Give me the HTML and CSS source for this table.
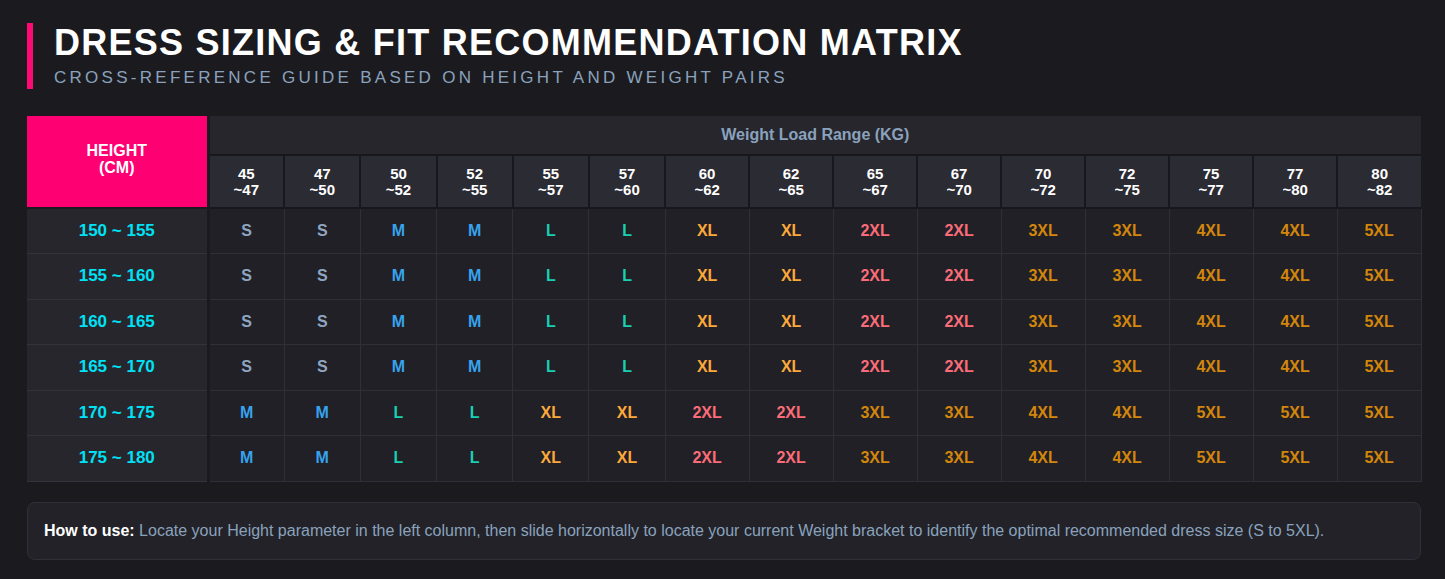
FILE: index.html
```html
<!DOCTYPE html>
<html lang="en">
<head>
<meta charset="utf-8">
<title>Dress Sizing &amp; Fit Recommendation Matrix</title>
<link rel="stylesheet" href="styles.css">
</head>
<body>
<main class="page">
  <header class="head">
    <h1 class="title">DRESS SIZING &amp; FIT RECOMMENDATION MATRIX</h1>
    <p class="subtitle">CROSS-REFERENCE GUIDE BASED ON HEIGHT AND WEIGHT PAIRS</p>
  </header>

  <table class="matrix">
    <colgroup>
      <col class="c-h">
      <col class="c-s"><col class="c-s"><col class="c-s"><col class="c-s"><col class="c-s"><col class="c-s">
      <col class="c-w"><col class="c-w"><col class="c-w"><col class="c-w"><col class="c-w"><col class="c-w"><col class="c-w"><col class="c-w"><col class="c-w">
    </colgroup>
    <thead>
      <tr class="r-top">
        <th class="corner" rowspan="2">HEIGHT<br>(CM)</th>
        <th class="range" colspan="15">Weight Load Range (KG)</th>
      </tr>
      <tr class="r-cols">
        <th>45<br>~47</th><th>47<br>~50</th><th>50<br>~52</th><th>52<br>~55</th><th>55<br>~57</th>
        <th>57<br>~60</th><th>60<br>~62</th><th>62<br>~65</th><th>65<br>~67</th><th>67<br>~70</th>
        <th>70<br>~72</th><th>72<br>~75</th><th>75<br>~77</th><th>77<br>~80</th><th>80<br>~82</th>
      </tr>
    </thead>
    <tbody>
      <tr>
        <th class="hgt">150 ~ 155</th>
        <td class="s">S</td><td class="s">S</td><td class="m">M</td><td class="m">M</td><td class="l">L</td><td class="l">L</td><td class="xl">XL</td><td class="xl">XL</td><td class="x2">2XL</td><td class="x2">2XL</td><td class="x3">3XL</td><td class="x3">3XL</td><td class="x3">4XL</td><td class="x3">4XL</td><td class="x3">5XL</td>
      </tr>
      <tr>
        <th class="hgt">155 ~ 160</th>
        <td class="s">S</td><td class="s">S</td><td class="m">M</td><td class="m">M</td><td class="l">L</td><td class="l">L</td><td class="xl">XL</td><td class="xl">XL</td><td class="x2">2XL</td><td class="x2">2XL</td><td class="x3">3XL</td><td class="x3">3XL</td><td class="x3">4XL</td><td class="x3">4XL</td><td class="x3">5XL</td>
      </tr>
      <tr>
        <th class="hgt">160 ~ 165</th>
        <td class="s">S</td><td class="s">S</td><td class="m">M</td><td class="m">M</td><td class="l">L</td><td class="l">L</td><td class="xl">XL</td><td class="xl">XL</td><td class="x2">2XL</td><td class="x2">2XL</td><td class="x3">3XL</td><td class="x3">3XL</td><td class="x3">4XL</td><td class="x3">4XL</td><td class="x3">5XL</td>
      </tr>
      <tr>
        <th class="hgt">165 ~ 170</th>
        <td class="s">S</td><td class="s">S</td><td class="m">M</td><td class="m">M</td><td class="l">L</td><td class="l">L</td><td class="xl">XL</td><td class="xl">XL</td><td class="x2">2XL</td><td class="x2">2XL</td><td class="x3">3XL</td><td class="x3">3XL</td><td class="x3">4XL</td><td class="x3">4XL</td><td class="x3">5XL</td>
      </tr>
      <tr>
        <th class="hgt">170 ~ 175</th>
        <td class="m">M</td><td class="m">M</td><td class="l">L</td><td class="l">L</td><td class="xl">XL</td><td class="xl">XL</td><td class="x2">2XL</td><td class="x2">2XL</td><td class="x3">3XL</td><td class="x3">3XL</td><td class="x3">4XL</td><td class="x3">4XL</td><td class="x3">5XL</td><td class="x3">5XL</td><td class="x3">5XL</td>
      </tr>
      <tr>
        <th class="hgt">175 ~ 180</th>
        <td class="m">M</td><td class="m">M</td><td class="l">L</td><td class="l">L</td><td class="xl">XL</td><td class="xl">XL</td><td class="x2">2XL</td><td class="x2">2XL</td><td class="x3">3XL</td><td class="x3">3XL</td><td class="x3">4XL</td><td class="x3">4XL</td><td class="x3">5XL</td><td class="x3">5XL</td><td class="x3">5XL</td>
      </tr>
    </tbody>
  </table>

  <div class="note">
    <strong>How to use:</strong> Locate your Height parameter in the left column, then slide horizontally to locate your current Weight bracket to identify the optimal recommended dress size (S to 5XL).
  </div>
</main>
</body>
</html>
```
FILE: styles.css
```css
* { box-sizing: border-box; }

html, body {
  margin: 0;
  padding: 0;
  background: #1b1b1f;
  font-family: "Liberation Sans", Arial, sans-serif;
}

.page {
  padding: 23px 24px 20px 27px;
}

.head {
  border-left: 6px solid #ff0a72;
  padding-left: 21px;
  margin-bottom: 27px;
}

.title {
  margin: 0;
  color: #ffffff;
  font-size: 36px;
  line-height: 40px;
  font-weight: 700;
  letter-spacing: 1.25px;
}

.subtitle {
  margin: 4px 0 0;
  color: #8aa2bd;
  font-size: 17px;
  line-height: 22px;
  letter-spacing: 3.27px;
}

.matrix {
  width: 1394px;
  border-collapse: collapse;
  table-layout: fixed;
}

.c-h { width: 181px; }
.c-s { width: 76.2px; }
.c-w { width: 84px; }

.matrix th,
.matrix td {
  padding: 0;
  text-align: center;
  font-weight: 700;
}

.corner {
  background: #ff0073;
  color: #ffffff;
  font-size: 16px;
  line-height: 17px;
  border-right: 3px solid #1b1b1f;
  border-bottom: 2px solid #1b1b1f;
  padding-bottom: 6px !important;
}

.r-top th.range {
  height: 39px;
  background: #26262c;
  color: #8aa2bd;
  font-size: 16px;
  border-bottom: 2px solid #18181c;
}

.r-cols th {
  height: 53px;
  background: #2b2b33;
  color: #ffffff;
  font-size: 15px;
  line-height: 16px;
  border-left: 2px solid #18181c;
  border-bottom: 2px solid #18181c;
}

.r-cols th:first-child { border-left: none; }

tbody th.hgt {
  height: 45.5px;
  background: #26262c;
  color: #00e1f5;
  font-size: 17px;
  border-right: 3px solid #1b1b1f;
  border-bottom: 1px solid #33333b;
}

tbody td {
  background: #202026;
  font-size: 16px;
  border: 1px solid #2f2f37;
}

tbody tr:first-child td { border-top: none; }

.s  { color: #8ea6c1; }
.m  { color: #36a3ec; }
.l  { color: #19cfb3; }
.xl { color: #fda93a; }
.x2 { color: #fb6c78; }
.x3 { color: #d3860c; }

.note {
  margin-top: 20px;
  width: 1394px;
  padding: 18px 16px 19px;
  background: #222228;
  border: 1px solid #303038;
  border-radius: 8px;
  color: #8aa2bd;
  font-size: 16px;
  line-height: 19px;
}

.note strong {
  color: #ffffff;
}
```
